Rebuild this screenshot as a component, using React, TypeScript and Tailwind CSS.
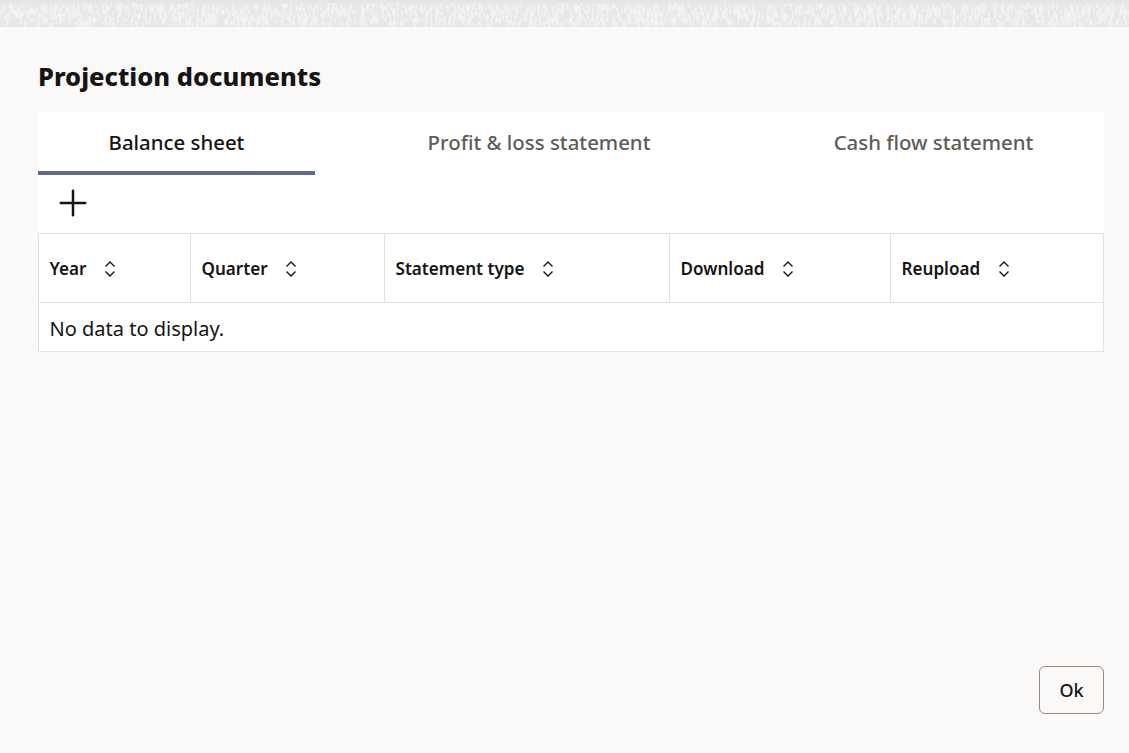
import { Plus } from "lucide-react";

const font = "font-['Noto_Sans','Open_Sans',sans-serif]";

const columns = [
  { label: "Year", width: "w-[152px]" },
  { label: "Quarter", width: "w-[194px]" },
  { label: "Statement type", width: "w-[285px]" },
  { label: "Download", width: "w-[221px]" },
  { label: "Reupload", width: "flex-1" },
];

const tabs = [
  { label: "Balance sheet", width: "w-[277px]", active: true },
  { label: "Profit & loss statement", width: "w-[448px]", active: false },
  { label: "Cash flow statement", width: "flex-1", active: false },
];

// small seeded generator so the band's flecks are uneven but stable
function flecks(count: number) {
  let seed = 17;
  const next = (max: number) => {
    seed = (seed * 16807) % 2147483647;
    return seed % max;
  };
  let d = "";
  for (let i = 0; i < count; i++) {
    d += `M${next(1129)} ${3 + next(20)}v${3 + next(5)}`;
  }
  return d;
}

const fleckPath = flecks(1900);

function SortIcon() {
  return (
    <svg width="14" height="18" viewBox="0 0 14 18" fill="none" stroke="#161513" strokeWidth="1.4">
      <path d="M2.500 6.500 7 2l4.500 4.500" />
      <path d="M2.500 11.500 7 16l4.500-4.500" />
    </svg>
  );
}

function Texture() {
  return (
    <svg className="block h-full w-full" viewBox="0 0 1129 27" xmlns="http://www.w3.org/2000/svg">
      <rect width="1129" height="27" fill="#e9e8e6" />
      <rect width="1129" height="3" fill="#e6e5e3" />
      <path d={fleckPath} stroke="#f9f8f7" strokeWidth="1.300" strokeOpacity="0.75" />
    </svg>
  );
}

export default function App() {
  return (
    <div className={`flex h-[753px] flex-col bg-[#fbf9f8] text-[#161513] ${font}`}>
      <div className="h-[27px] shrink-0">
        <Texture />
      </div>

      <div className="flex flex-1 flex-col pl-[38px] pr-[25px]">
        <h1 className="mt-[32px] h-[35px] text-[25.500px] leading-[35px] font-extrabold">Projection documents</h1>

        <div className="mt-[18px] bg-white">
          <div className="flex h-[63px]">
            {tabs.map((tab) => (
              <div
                key={tab.label}
                className={`${tab.width} flex items-start justify-center pt-[15px] text-[20.400px] leading-[30px] font-medium ${
                  tab.active ? "border-b-4 border-[#5f6b8c] text-[#161513]" : "text-[#5e5c59]"
                }`}
              >
                {tab.label}
              </div>
            ))}
          </div>

          <div className="flex h-[58px] items-center pl-[14px] pb-[2px]">
            <Plus size={42} strokeWidth={2.500} absoluteStrokeWidth />
          </div>

          <div className="border border-[#e3e3e1]">
            <div className="flex h-[69px] border-b border-[#e3e3e1]">
              {columns.map((col, i) => (
                <div
                  key={col.label}
                  className={`${col.width} flex items-center gap-[16.500px] pl-[10.500px] pt-[1px] text-[17.100px] font-semibold ${
                    i < columns.length - 1 ? "border-r border-[#e3e3e1]" : ""
                  }`}
                >
                  {col.label}
                  <SortIcon />
                </div>
              ))}
            </div>
            <div className="flex h-[48px] items-center pl-[10.500px] pt-[3px] text-[20px]">No data to display.</div>
          </div>
        </div>

        <div className="mt-auto mb-[39px] flex justify-end">
          <button className="h-[48px] w-[65px] rounded-[6px] border border-[#8f8c88] text-[18px] font-medium">
            Ok
          </button>
        </div>
      </div>
    </div>
  );
}
